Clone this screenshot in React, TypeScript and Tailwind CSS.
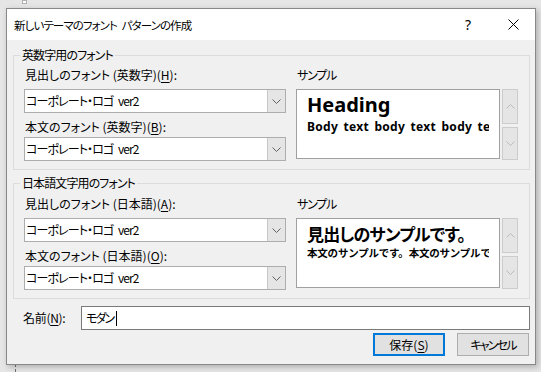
import React from 'react';

const jp = "font-['Noto_Sans_CJK_JP','Noto_Sans',sans-serif] [font-feature-settings:'palt']";

const Chevron: React.FC<{ up?: boolean; color?: string }> = ({ up, color = '#606060' }) => (
  <svg width="9" height="5" viewBox="0 0 9 5" className={up ? 'rotate-180' : ''}>
    <path d="M0.5 0.5 L4.5 4.5 L8.5 0.5" fill="none" stroke={color} strokeWidth="1" />
  </svg>
);

const Mn: React.FC<{ k: string }> = ({ k }) => <span className="underline underline-offset-2">{k}</span>;

const Combo: React.FC = () => (
  <div className="flex h-[24px] w-[262px] border border-[#adadad] bg-white">
    <div className="flex flex-1 items-center pl-[1px] text-[12px] tracking-[-0.9px] [word-spacing:3px] text-black">コーポレート・ロゴ ver2</div>
    <div className="flex w-[18px] items-center justify-center border-l border-[#c8c8c8] bg-[#e5e5e5]">
      <Chevron />
    </div>
  </div>
);

const ScrollBtns: React.FC = () => (
  <div className="flex w-[16px] flex-col gap-[3px]">
    <div className="flex h-[35px] items-center justify-center border border-[#cccccc] bg-[#e5e5e5]">
      <Chevron up color="#bcbcbc" />
    </div>
    <div className="flex h-[33px] items-center justify-center border border-[#cccccc] bg-[#e5e5e5]">
      <Chevron color="#bcbcbc" />
    </div>
  </div>
);

type GroupProps = {
  legend: string;
  l1: React.ReactNode;
  l2: React.ReactNode;
  heading: string;
  body: string;
  latin?: boolean;
  topGap: string;
};

const Group: React.FC<GroupProps> = ({ legend, l1, l2, heading, body, latin, topGap }) => (
  <fieldset className="border border-[#dcdcdc] pl-[10px] pr-[10px] pb-[8px]">
    <legend className="-ml-[4px] px-[2px] text-[12px] leading-[16px] tracking-[-0.9px] text-black">{legend}</legend>
    <div className={`flex gap-[10px] ${topGap}`}>
      <div className="flex flex-col">
        <div className="h-[16px] pl-[1px] text-[12px] leading-[16px]">{l1}</div>
        <div className="mt-[6px]"><Combo /></div>
        <div className="mt-[6px] h-[16px] pl-[1px] text-[12px] leading-[16px]">{l2}</div>
        <div className="mt-[2px]"><Combo /></div>
      </div>
      <div className="flex flex-col">
        <div className="h-[16px] pl-[1px] text-[12px] leading-[16px] tracking-[-1.2px]">サンプル</div>
        <div className="mt-[6px] flex gap-[2px]">
          <div className="h-[70px] w-[204px] overflow-hidden border border-[#a0a0a0] bg-white pt-[3px] pl-[10px] pr-[10px]">
            {latin ? (
              <>
                <div className="font-['Noto_Sans',sans-serif] text-[20px] font-bold leading-[24px] text-black">{heading}</div>
                <div className="mt-[2px] overflow-hidden whitespace-nowrap font-['Noto_Sans',sans-serif] text-[12px] font-bold leading-[16px] tracking-[0.3px] [word-spacing:2px] text-black">{body}</div>
              </>
            ) : (
              <>
                <div className="whitespace-nowrap text-[17px] font-bold leading-[24px] tracking-[-0.8px] text-black">{heading}</div>
                <div className="-mt-[1px] overflow-hidden whitespace-nowrap text-[10.5px] font-bold leading-[16px] tracking-[-0.2px] [font-feature-settings:normal] text-black">{body}</div>
              </>
            )}
          </div>
          <ScrollBtns />
        </div>
      </div>
    </div>
  </fieldset>
);

export default function App() {
  return (
    <div className={`relative h-[372px] w-[541px] overflow-hidden bg-[#e6e6e6] pl-[6px] pt-[8px] text-black ${jp}`}>
      <div className="absolute left-[22px] top-0 h-[4px] w-[5px] border border-[#b0b0b0] bg-white" />
      <div className="absolute left-[15px] top-[364px] h-[8px] border-l border-dashed border-[#707070]" />
      <div className="relative flex h-[357px] w-[530px] flex-col border border-[#888888] bg-[#f0f0f0] shadow-[2px_2px_6px_rgba(0,0,0,0.25)]">
        <div className="flex h-[31px] items-center bg-white">
          <div className="flex-1 pl-[7px] text-[11.5px] leading-[16px] tracking-[-0.9px] [word-spacing:3px]">新しいテーマのフォント パターンの作成</div>
          <div className="flex h-full w-[46px] items-center justify-center font-['Noto_Sans',sans-serif] text-[14px]">?</div>
          <div className="flex h-full w-[44px] items-center justify-center">
            <svg width="11" height="11" viewBox="0 0 11 11">
              <path d="M0.5 0.5 L10.5 10.5 M10.5 0.5 L0.5 10.5" stroke="#000" strokeWidth="1" />
            </svg>
          </div>
        </div>
        <div className="flex flex-col pl-[6px] pr-[5px]">
          <div className="mt-[7px]">
            <Group
              legend="英数字用のフォント"
              l1={<>見出しのフォント (英数字)(<Mn k="H" />):</>}
              l2={<>本文のフォント (英数字)(<Mn k="B" />):</>}
              heading="Heading"
              body="Body text body text body text body text"
              latin
              topGap="mt-[4px]"
            />
          </div>
          <div className="mt-[5px]">
            <Group
              legend="日本語文字用のフォント"
              l1={<>見出しのフォント (日本語)(<Mn k="A" />):</>}
              l2={<>本文のフォント (日本語)(<Mn k="O" />):</>}
              heading="見出しのサンプルです。"
              body="本文のサンプルです。本文のサンプルです。"
              topGap="mt-[5px]"
            />
          </div>
          <div className="mt-[7px] flex items-center">
            <div className="w-[68px] pl-[10px] text-[12px] tracking-[-0.3px]">名前(<Mn k="N" />):</div>
            <div className="flex h-[24px] flex-1 items-center border border-[#7a7a7a] bg-white pl-[4px] text-[12px] tracking-[-2px]">
              モダン<span className="ml-[3px] inline-block h-[15px] w-px bg-black" />
            </div>
          </div>
          <div className="mt-[3px] flex justify-end gap-[12px] pr-[1px]">
            <div className="flex h-[23px] w-[72px] items-center justify-center border-2 border-[#0078d7] bg-[#e1e1e1] text-[12px]">
              保存(<Mn k="S" />)
            </div>
            <div className="flex h-[23px] w-[72px] items-center justify-center border border-[#adadad] bg-[#e1e1e1] text-[12px] tracking-[-1.8px]">
              キャンセル
            </div>
          </div>
        </div>
      </div>
    </div>
  );
}
